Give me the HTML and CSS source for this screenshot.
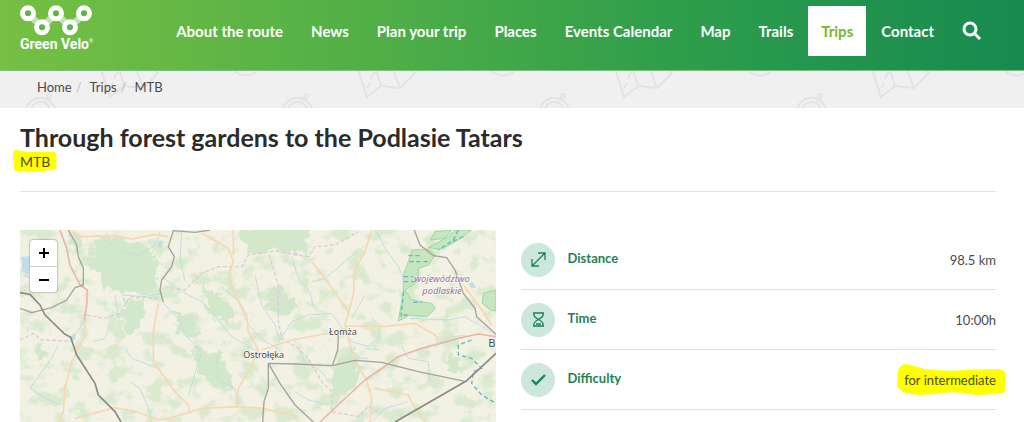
FILE: index.html
```
<!DOCTYPE html>
<html lang="en">
<head>
    <meta charset="UTF-8">
    <meta name="viewport" content="width=device-width, initial-scale=1.0">
    <title>Through forest gardens to the Podlasie Tatars</title>
    <link rel="stylesheet" href="styles.css">
</head>
<body>
    <header class="header">
        <a href="#" class="logo">
            <svg class="logo-chain" viewBox="0 0 216 92" aria-hidden="true">
                <path d="M24 25L66 67L108 25L150 67L192 25" fill="none" stroke="#bfe3b4" stroke-width="20"/>
                <g fill="none" stroke="#fff" stroke-width="16">
                    <circle cx="24" cy="25" r="16"/>
                    <circle cx="66" cy="67" r="16"/>
                    <circle cx="108" cy="25" r="16"/>
                    <circle cx="150" cy="67" r="16"/>
                    <circle cx="192" cy="25" r="16"/>
                </g>
                <g fill="#5fb344">
                    <circle cx="24" cy="25" r="9"/>
                    <circle cx="66" cy="67" r="9"/>
                    <circle cx="108" cy="25" r="9"/>
                    <circle cx="150" cy="67" r="9"/>
                    <circle cx="192" cy="25" r="9"/>
                </g>
            </svg>
            <span class="logo-name">Green Velo<sup>®</sup></span>
        </a>
        <nav class="nav">
            <a href="#">About the route</a>
            <a href="#">News</a>
            <a href="#">Plan your trip</a>
            <a href="#">Places</a>
            <a href="#">Events Calendar</a>
            <a href="#">Map</a>
            <a href="#">Trails</a>
            <a href="#" class="active">Trips</a>
            <a href="#">Contact</a>
        </nav>
        <button class="search" type="button" aria-label="Search">
            <svg viewBox="0 0 20 20" fill="none" stroke="#fff" stroke-width="3">
                <circle cx="8" cy="8" r="6"/>
                <path d="M12 12L18 18"/>
            </svg>
        </button>
    </header>

    <div class="breadcrumb-bar">
        <svg class="breadcrumb-pattern" aria-hidden="true">
            <defs>
                <pattern id="doodles" width="257" height="38" patternUnits="userSpaceOnUse">
                    <g fill="none" stroke="#e3e3e3" stroke-width="2">
                        <path d="M101 -2L110 26L124 15L143 17L158 2L150 -4"/>
                        <path d="M119 -2L124 15M136 -2L143 17"/>
                        <path d="M110 17L113 12M114 8L116 3L119 1" />
                        <path d="M234 0Q246 9 258 0"/>
                        <path d="M26 38A15 15 0 0 1 55 38M31 38A10 10 0 0 1 50 38"/>
                        <circle cx="49" cy="25" r="2"/>
                        <path d="M46 30L44 33"/>
                    </g>
                </pattern>
            </defs>
            <rect width="100%" height="100%" fill="url(#doodles)"/>
        </svg>
        <nav class="breadcrumb" aria-label="Breadcrumb">
            <a href="#">Home</a>
            <a href="#">Trips</a>
            <span>MTB</span>
        </nav>
    </div>

    <main>
        <h1>Through forest gardens to the Podlasie Tatars</h1>
        <p class="category">
            <span class="marked">
                <svg class="marker marker-short" viewBox="0 0 44 22" preserveAspectRatio="none" aria-hidden="true">
                    <path d="M0 2Q0 0 4 0L14 2L40 2Q43 2 43 6L43 17Q43 20 38 20L20 22L4 21Q1 21 1 18Z" fill="#ffff00"/>
                </svg>
                <span class="marked-text">MTB</span>
            </span>
        </p>
        <div class="trip">
            <div class="map">
                <svg class="map-canvas" viewBox="15 15 1428 576" preserveAspectRatio="xMinYMin slice" role="img" aria-label="Map of the trip area">
                    <defs>
                        <filter id="woods" x="0" y="0" width="100%" height="100%" color-interpolation-filters="sRGB">
                            <feTurbulence type="fractalNoise" baseFrequency="0.018 0.022" numOctaves="5" seed="8"/>
                            <feColorMatrix values="0 0 0 0 0.82  0 0 0 0 0.91  0 0 0 0 0.78  6 0 0 0 -3"/>
                        </filter>
                        <filter id="rough" x="-10%" y="-10%" width="120%" height="120%">
                            <feTurbulence type="fractalNoise" baseFrequency="0.03" numOctaves="4" seed="3"/>
                            <feDisplacementMap in="SourceGraphic" scale="60" xChannelSelector="R" yChannelSelector="G"/>
                        </filter>
                    </defs>
                    <rect x="15" y="15" width="1428" height="640" fill="#f2f1e4"/>
                    <rect x="15" y="15" width="1428" height="640" filter="url(#woods)" opacity="0.75"/>

                    <!-- forests -->
                    <g fill="#d3e8ca" filter="url(#rough)">
                        <path d="M235 50L300 35L390 60L420 95L425 195L385 215L330 195L260 190L240 150L225 110Z"/>
                        <path d="M325 225L370 215L385 260L360 330L330 320L320 270Z"/>
                        <path d="M670 15L880 15L885 95L810 80L740 85L690 65Z"/>
                        <path d="M560 190L620 210L650 260L640 300L590 270Z"/>
                        <path d="M530 370L600 375L650 450L640 490L580 470L540 420Z"/>
                        <path d="M960 400L1020 380L1040 440L990 510L950 520Z"/>
                        <path d="M480 260L530 280L560 330L530 345L490 310Z"/>
                        <path d="M160 30L190 20L200 60L180 90Z"/>
                        <path d="M60 360L100 370L90 400L60 395Z"/>
                        <path d="M1290 400L1330 390L1340 430L1300 440Z"/>
                        <path d="M750 200L800 190L850 240L800 280L760 250Z"/>
                    </g>

                    <!-- national parks -->
                    <g fill="#c5e6bf" stroke="#9fd6a4" stroke-width="3">
                        <path d="M1192 75L1240 72L1260 90L1240 120L1210 130L1208 170L1170 195L1190 225L1250 235L1262 250L1235 275L1185 270L1150 288L1165 200L1165 150L1180 110Z"/>
                        <path d="M1240 68L1300 35L1320 15L1370 15L1330 45L1280 72Z"/>
                        <path d="M1443 195L1405 205L1402 235L1425 255L1443 258Z"/>
                        <path d="M1245 45L1260 20L1310 15L1290 40Z"/>
                    </g>
                    <g fill="none" stroke="#62b9c6" stroke-width="4" stroke-dasharray="13 8">
                        <path d="M1330 15L1315 45L1270 75M1345 35L1300 55M1180 92H1215M1183 110H1240M1167 155H1195M1167 170H1205M1166 200L1158 275M1195 232H1220M1165 270H1180"/>
                        <path d="M1370 345L1330 360L1330 390L1370 400L1400 430L1375 440L1370 475L1400 510L1443 535"/>
                    </g>

                    <!-- rivers and lakes -->
                    <g fill="none" stroke="#c4dde4" stroke-width="3" stroke-linejoin="round">
                        <path d="M15 100L60 90L75 140L50 170M100 110L80 145L45 120M25 150L70 170"/>
                        <path d="M250 30L290 60L310 75L370 90L420 60L435 20M500 20L495 100L510 170"/>
                        <path d="M440 155L500 200L560 230L610 285L650 335L720 375L760 395"/>
                        <path d="M445 235L490 280L510 330L560 380L545 430L520 510"/>
                        <path d="M300 210L310 270L285 300L270 340L235 350M320 210L390 215L440 205"/>
                        <path d="M620 185L670 230L700 300L750 350L790 370"/>
                        <path d="M330 370L350 400L430 430L445 450M345 470L375 490L400 550L410 590"/>
                        <path d="M130 360L110 400L45 490L90 520L140 540M215 280L180 330L165 350"/>
                        <path d="M605 395L610 465L660 490L670 540M720 150L740 240L780 300L795 350"/>
                        <path d="M830 95L850 160L885 200L895 245M890 170L930 160L990 110L1020 85"/>
                        <path d="M790 350L830 290L880 270L950 265L975 300L1010 350L1060 365L1090 340L1095 300L1070 280M1010 280L1050 210"/>
                        <path d="M1085 20L1110 70L1150 125L1165 160M1095 375L1050 370M1160 365L1180 400L1240 410L1245 470M1185 280L1300 285L1350 275L1443 330"/>
                        <path d="M850 370L870 410L920 440L940 470M1020 400L1060 400M840 500L880 525L940 540M1070 590L1110 550L1180 530M1260 370L1290 340L1350 330"/>
                    </g>
                    <g fill="#c3dde6">
                        <path d="M20 95L45 100L40 150L22 140ZM95 115L115 120L118 140L98 136ZM1360 175L1375 172L1383 188L1368 190ZM165 335L180 325L182 340L168 350ZM430 50L442 48L440 70L428 66Z"/>
                    </g>

                    <!-- borders -->
                    <g fill="none" stroke="#dccbd8" stroke-width="4" stroke-dasharray="12 6">
                        <path d="M15 345L55 325L80 345L160 348M215 270L265 280L315 265L345 215L430 220"/>
                        <path d="M450 185L510 195L560 145L610 125L680 125L700 90L780 78L880 95L900 65L960 60L1030 20"/>
                        <path d="M762 90L790 180L790 290L800 340L850 370L880 400L920 470L950 500L950 560L1030 575L1060 545L1090 560"/>
                    </g>

                    <!-- roads -->
                    <g fill="none" stroke="#f7d8b0" stroke-width="5" stroke-linejoin="round">
                        <path d="M170 20L200 35L290 32L350 42L420 28L460 35"/>
                        <path d="M213 285L205 340L170 410L150 490L145 560L130 591"/>
                        <path d="M430 235L415 320L415 410L440 445L480 500L520 540L525 565"/>
                        <path d="M560 25L640 70L655 110L640 150L660 210L695 270L700 320L730 375L700 440L670 490L665 545"/>
                        <path d="M655 15L655 90M180 580L300 548L370 562L430 585L480 575L560 550L665 545L740 550L850 575"/>
                        <path d="M1070 15L1050 80L1020 130L1015 210L990 300L1005 360L1030 425L1055 465L1070 520L1065 591"/>
                        <path d="M890 110L930 160L1000 260M990 303L1110 304L1200 295L1260 330L1270 345"/>
                        <path d="M740 375L830 345L990 315M1080 490L1180 510L1200 550L1230 591M1345 180L1390 240L1430 300"/>
                    </g>
                    <g fill="none" stroke="#eeb5a5" stroke-width="5" stroke-linejoin="round">
                        <path d="M135 15L155 70L165 120L195 180L217 195L215 240L208 285"/>
                        <path d="M915 591L985 525L1050 465L1115 420L1150 395L1220 370L1330 340L1390 327L1443 335"/>
                    </g>

                    <!-- railways -->
                    <g fill="none" stroke="#a5a39c" stroke-width="4" stroke-linejoin="round">
                        <path d="M160 15L185 60L190 95L205 130L205 180L180 188L155 225L110 248L50 263L15 250"/>
                        <path d="M585 15L540 22L475 17L460 65L478 95L470 125L440 165L435 195L445 232"/>
                        <path d="M743 591L747 530L760 490L760 415L840 417L950 422L1020 406L1100 412L1210 440L1350 469"/>
                        <path d="M760 415L795 475L840 540L895 591M952 422L968 375L970 330"/>
                        <path d="M1198 15L1215 60L1255 92L1295 98L1320 135L1345 205L1380 250L1385 275L1443 328"/>
                    </g>
                    <g fill="none" stroke="#8b8a85" stroke-width="5" stroke-linejoin="round">
                        <path d="M15 203L45 208L75 240L90 270L150 328L167 337L185 390L240 475L250 510L300 560L318 591"/>
                        <path d="M1140 591L1355 467L1443 385"/>
                    </g>

                    <g class="map-labels">
                        <text x="685" y="400">Ostrołęka</text>
                        <text x="942" y="329">Łomża</text>
                        <text x="1420" y="365" class="map-city">B</text>
                        <text x="1281" y="170" class="map-region">województwo</text>
                        <text x="1281" y="206" class="map-region">podlaskie</text>
                    </g>
                </svg>
                <div class="zoom">
                    <button type="button" aria-label="Zoom in">
                        <svg viewBox="0 0 12 12"><path d="M6 1V11M1 6H11"/></svg>
                    </button>
                    <button type="button" aria-label="Zoom out">
                        <svg viewBox="0 0 12 12"><path d="M1 6H11"/></svg>
                    </button>
                </div>
            </div>

            <dl class="details">
                <div class="detail">
                    <svg class="detail-icon" viewBox="0 0 34 34" aria-hidden="true">
                        <path stroke-width="1.3" d="M11 23L24 10M17 10H24V17M11 16V23H18"/>
                    </svg>
                    <dt>Distance</dt>
                    <dd>98.5 km</dd>
                </div>
                <div class="detail">
                    <svg class="detail-icon" viewBox="0 0 34 34" aria-hidden="true">
                        <path stroke-width="1.4" d="M12 10H23M12 23H23M13 10V12Q13 14 17.5 16.5Q22 14 22 12V10M13 23V21Q13 19 17.5 16.5Q22 19 22 21V23M15 21H20"/>
                    </svg>
                    <dt>Time</dt>
                    <dd>10:00h</dd>
                </div>
                <div class="detail">
                    <svg class="detail-icon" viewBox="0 0 34 34" aria-hidden="true">
                        <path stroke-width="2.4" d="M11 17L15 21L24 12"/>
                    </svg>
                    <dt>Difficulty</dt>
                    <dd>
                        <span class="marked">
                            <svg class="marker marker-long" viewBox="0 0 112 33" preserveAspectRatio="none" aria-hidden="true">
                                <path d="M1 8Q4 0 10 1L28 6Q50 9 72 7L100 6Q111 6 111 12L110 27Q109 31 100 31L80 32Q58 27 40 31Q20 33 9 30Q3 28 0 23Z" fill="#ffff00"/>
                            </svg>
                            <span class="marked-text">for intermediate</span>
                        </span>
                    </dd>
                </div>
            </dl>
        </div>
    </main>
</body>
</html>
```
FILE: styles.css
```
* {
    box-sizing: border-box;
}
body {
    margin: 0;
    font-family: Lato, "Noto Sans", sans-serif;
    font-size: 13px;
    color: #4a4a4a;
    background-color: #fff;
}
a {
    color: inherit;
    text-decoration: none;
}
button {
    padding: 0;
    border: none;
    background: none;
    cursor: pointer;
}

/* Header */
.header {
    display: flex;
    align-items: flex-start;
    justify-content: space-between;
    height: 71px;
    padding: 5px 42px 0 20px;
    border-bottom: 1px solid #7dbd83;
    background: linear-gradient(to right, #76c043, #4fae47 38%, #2f9e4b 65%, #178a50);
}
.logo {
    display: flex;
    flex-direction: column;
    width: 78px;
    color: #fff;
}
.logo-chain {
    display: block;
    width: 72px;
}
.logo-name {
    font-family: Roboto, sans-serif;
    font-size: 14px;
    font-weight: bold;
    line-height: 16px;
    white-space: nowrap;
}
.logo-name sup {
    font-size: 5px;
    font-weight: normal;
    line-height: 0;
}
.nav {
    display: flex;
    gap: 2px;
    margin-left: auto;
    padding-top: 1px;
}
.nav a {
    padding: 0 13px;
    font-size: 15px;
    font-weight: bold;
    line-height: 50px;
    color: #fff;
    white-space: nowrap;
}
.nav a:hover,
.nav a.active {
    background-color: #fff;
    color: #76b82a;
}
.search {
    width: 20px;
    margin: 16px 0 0 15px;
}
.search svg {
    display: block;
}

/* Breadcrumb */
.breadcrumb-bar {
    position: relative;
    height: 37px;
    padding: 0 37px;
    background-color: #f0f0f0;
}
.breadcrumb-pattern {
    position: absolute;
    top: 0;
    left: 0;
    width: 100%;
    height: 100%;
}
.breadcrumb {
    position: relative;
    display: flex;
    line-height: 32px;
}
.breadcrumb a::after {
    content: "/";
    padding: 0 8px 0 4px;
    color: #bbb;
}

/* Trip */
main {
    padding: 12px 28px 0 20px;
}
h1 {
    margin: 0;
    font-size: 25px;
    line-height: 34px;
    color: #2b2b2b;
}
.category {
    margin: 0;
    padding-bottom: 21px;
    border-bottom: 1px solid #e0e0e0;
    font-size: 14px;
    line-height: 16px;
}
.marked {
    position: relative;
}
.marker {
    position: absolute;
}
.marker-short {
    top: -3px;
    left: -7px;
    width: calc(100% + 14px);
    height: 22px;
}
.marker-long {
    top: -9px;
    left: -7px;
    width: calc(100% + 18px);
    height: 33px;
}
.marked-text {
    position: relative;
    color: #4c4c10;
}
.trip {
    display: grid;
    grid-template-columns: 1fr 1fr;
    gap: 25px;
    margin-top: 38px;
}

/* Map */
.map {
    position: relative;
    min-height: 192px;
    overflow: hidden;
}
.map-canvas {
    display: block;
    width: 100%;
    height: 100%;
}
.map-labels {
    font-family: "Noto Sans", sans-serif;
    font-size: 27px;
    fill: #4c4c4c;
    stroke: #fff;
    stroke-width: 4px;
    stroke-opacity: 0.6;
    paint-order: stroke;
}
.map-city {
    font-size: 33px;
}
.map-region {
    font-size: 28px;
    font-style: italic;
    text-anchor: middle;
    fill: #9a72a0;
}
.zoom {
    position: absolute;
    top: 10px;
    left: 10px;
    width: 27px;
    border-radius: 3px;
    background-color: #fff;
    box-shadow: 0 0 2px rgba(0, 0, 0, 0.6);
}
.zoom button {
    display: flex;
    align-items: center;
    justify-content: center;
    width: 100%;
    height: 26px;
}
.zoom button + button {
    border-top: 1px solid #ccc;
}
.zoom svg {
    width: 12px;
    stroke: #000;
    stroke-width: 2px;
}

/* Details */
.details {
    margin: 0;
}
.detail {
    display: flex;
    align-items: center;
    height: 60px;
    border-bottom: 1px solid #e0e0e0;
}
.detail-icon {
    width: 34px;
    margin-right: 13px;
    border-radius: 50%;
    background-color: #cce7db;
    fill: none;
    stroke: #1f8254;
}
.detail dt {
    padding-bottom: 4px;
    font-weight: bold;
    color: #1f8254;
}
.detail dd {
    margin: 0 0 0 auto;
}
```
